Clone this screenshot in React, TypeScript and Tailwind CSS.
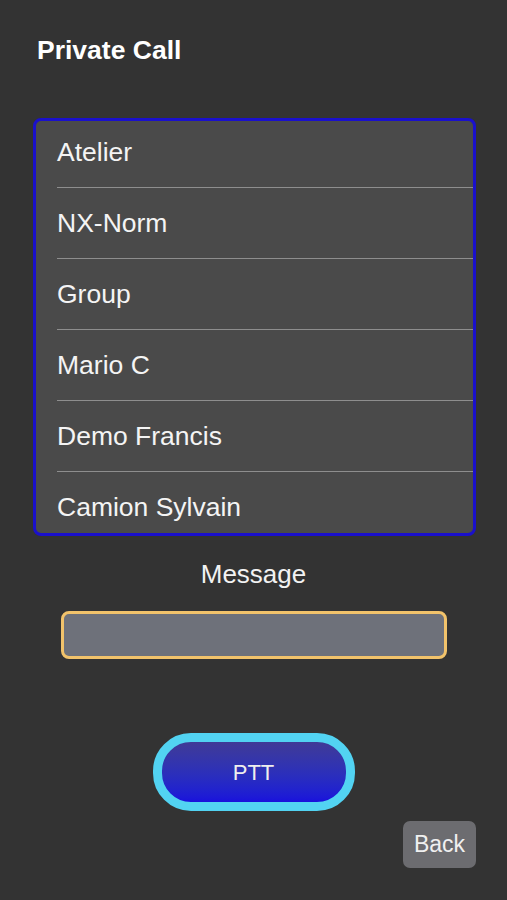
const contacts = ['Atelier', 'NX-Norm', 'Group', 'Mario C', 'Demo Francis', 'Camion Sylvain'];

export default function App() {
  return (
    <div
      className="flex flex-col w-[507px] h-[900px] bg-[#333333] text-white overflow-hidden"
      style={{ fontFamily: '"Liberation Sans", Arial, sans-serif' }}
    >
      {/* Title */}
      <h1 className="pt-[35px] pl-[37px] text-[26.5px] leading-[30px] font-bold text-white">Private Call</h1>

      {/* Contact list */}
      <div className="mt-[53px] ml-[33px] w-[443px] h-[418px] rounded-[8px] border-[3px] border-[#1a10cc] bg-[#4a4a4a] overflow-hidden">
        <div className="-mt-[4px]">
          {contacts.map((name) => (
            <div key={name} className="pl-[21px]">
              <div className="h-[70px] flex items-center text-[26.5px] leading-[30px] text-[#f4f4f4]">{name}</div>
              <div className="h-px bg-[#8e8e8e]" />
            </div>
          ))}
        </div>
      </div>

      {/* Message */}
      <div className="mt-[23px] text-center text-[26px] leading-[30px] text-[#f2f2f2]">Message</div>
      <div className="mt-[22px] ml-[61px] w-[386px] h-[48px] rounded-[8px] border-[3px] border-[#f2c36b] bg-[#6e717a]" />

      {/* PTT */}
      <div className="mt-[74px] flex justify-center">
        <button className="w-[202px] h-[78px] rounded-[38px] border-[9px] border-[#52d3f2] bg-gradient-to-b from-[#403a96] to-[#1a10dc] text-[22px] text-[#eeeeee]">
          PTT
        </button>
      </div>

      {/* Back */}
      <div className="mt-[10px] flex justify-end pr-[31px]">
        <button className="w-[73px] h-[47px] rounded-[7px] bg-[#6c6c70] text-[23px] text-[#f0f0f0]">Back</button>
      </div>
    </div>
  );
}
